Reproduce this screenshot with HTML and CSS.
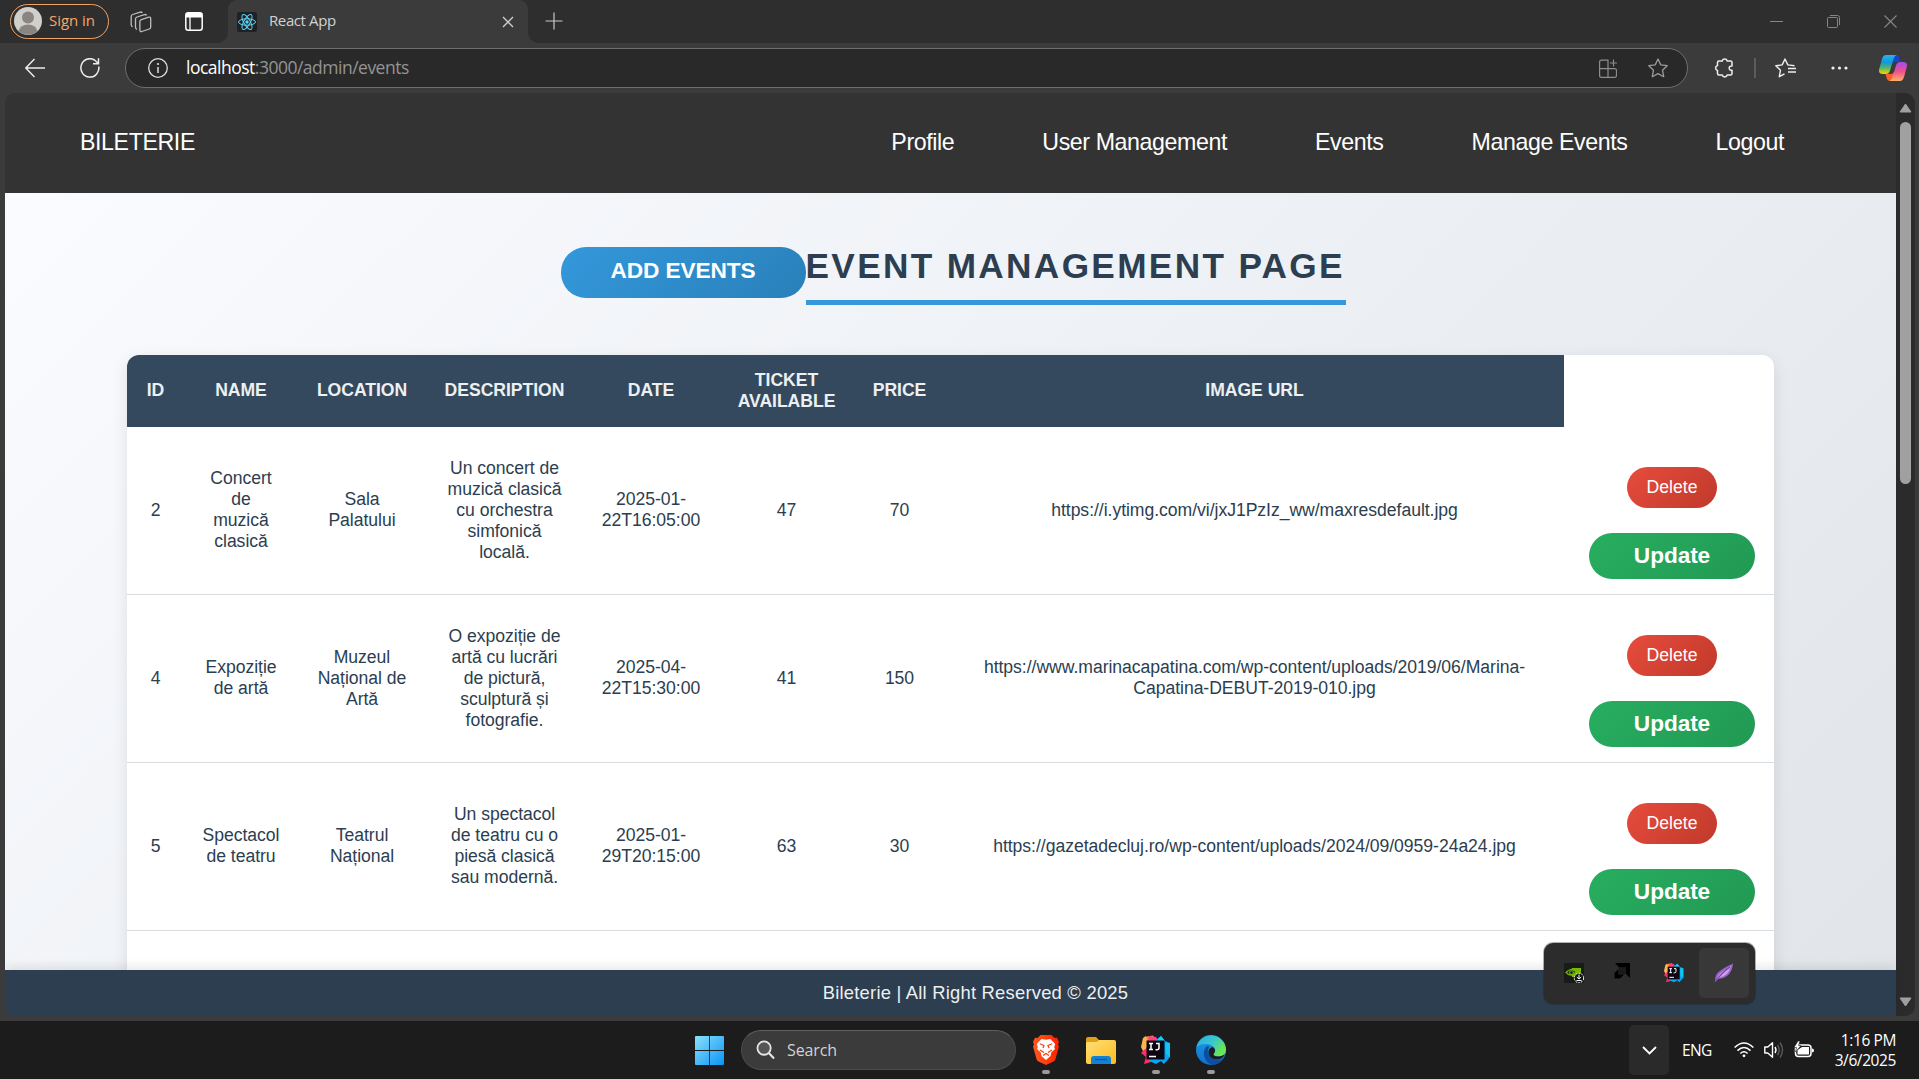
FILE: index.html
```html
<!DOCTYPE html>
<html lang="en">
<head>
<meta charset="utf-8">
<title>React App</title>
<link rel="stylesheet" href="styles.css">
</head>
<body>
<svg width="0" height="0" class="defs">
  <defs>
    <linearGradient id="gWin" x1="0" y1="0" x2="1" y2="1"><stop offset="0" stop-color="#8be0fc"/><stop offset="1" stop-color="#0a94f5"/></linearGradient>
    <linearGradient id="gFold" x1="0" y1="0" x2="1" y2="1"><stop offset="0" stop-color="#ffe07a"/><stop offset="1" stop-color="#fdbb1c"/></linearGradient>
    <linearGradient id="gBrave" x1="0" y1="0" x2="1" y2="0"><stop offset="0" stop-color="#ff5a1f"/><stop offset="1" stop-color="#ff2200"/></linearGradient>
    <linearGradient id="gEdgeTop" x1="0" y1="0" x2="1" y2=".6"><stop offset="0" stop-color="#2fa8e0"/><stop offset=".5" stop-color="#36c6d0"/><stop offset="1" stop-color="#6ee84f"/></linearGradient>
    <linearGradient id="gEdgeMid" x1="0" y1="0" x2="0" y2="1"><stop offset="0" stop-color="#1b9de2"/><stop offset="1" stop-color="#0f6fd0"/></linearGradient>
    <linearGradient id="gCopA" x1="0" y1="0" x2="0" y2="1"><stop offset="0" stop-color="#20b4f6"/><stop offset=".4" stop-color="#1597d8"/><stop offset=".7" stop-color="#5cb85c"/><stop offset="1" stop-color="#ffd400"/></linearGradient>
    <linearGradient id="gCopB" x1="0" y1="0" x2="0" y2="1"><stop offset="0" stop-color="#a34df0"/><stop offset=".5" stop-color="#f0508c"/><stop offset="1" stop-color="#ffb06a"/></linearGradient>
    <symbol id="ij" viewBox="0 0 30 30">
      <path d="M3 2l9-1.500 4 5-9 12z" fill="#ff8a2a"/><path d="M2 3l3-2 2 9-4 8-3-6z" fill="#fdb44b"/>
      <path d="M8 1l7 1 4 7-14 9z" fill="#ff3c8e"/><path d="M4 14l10 2-4 11-7 2 2-7-5-4z" fill="#fe2d6c"/>
      <path d="M15 5l5-4 4 5 5 2 0 14-6 7-3-3-5 3-7-3z" fill="#08a5f5"/><path d="M20 1l4 5-4 3-5-3z" fill="#12d0f5"/><path d="M24 8l5 0 0 14-4-3z" fill="#10c4f4"/>
      <rect x="5.500" y="5.500" width="18" height="19" fill="#0c0710"/>
      <path d="M8 8.500h4M10 8.500v6M8 14.500h4M15 8.500h3v4.500q0 1.700-2 1.700h-1.500M8 21.500h7" stroke="#fff" stroke-width="1.500" fill="none"/>
    </symbol>
  </defs>
</svg>

<div class="desktop">
  <header class="tabstrip">
    <div class="signin">
      <svg class="avatar" viewBox="0 0 28 28"><circle cx="14" cy="14" r="14" fill="#d1cfcb"/><circle cx="14" cy="10.500" r="6" fill="#8a8580"/><path d="M4.500 24q2-6.500 9.500-6.500t9.500 6.500a14 14 0 0 1-19 0z" fill="#8a8580"/></svg>
      <span>Sign in</span>
    </div>
    <svg class="i-spaces" viewBox="0 0 22 22" fill="none" stroke="#bdbdbd" stroke-width="1.300" stroke-linejoin="round"><path d="M11.300 8.600l7.500-2.400q1.900-.5 1.900 1.400v8.600q0 1.300-1.400 1.800l-7.500 2.500q-1.900.5-1.900-1.400v-8.700q0-1.300 1.400-1.800z"/><path d="M7 18.300q-1.500-.3-1.500-2V8q0-1.500 1.500-2l7.500-2.400q1.500-.4 2 .8M2.700 15.700q-1.500-.3-1.500-2V5.500Q1.200 4 2.700 3.500l7.500-2.400q1.500-.4 2 .8"/></svg>
    <svg class="i-vtabs" viewBox="0 0 18 19"><rect x=".8" y=".8" width="16.400" height="17.400" rx="2.500" fill="none" stroke="#fff" stroke-width="1.500"/><path d="M.8 3q0-2.200 2.200-2.200h12q2.200 0 2.200 2.200v2.500H.8z" fill="#fff"/><path d="M5 5v13" stroke="#fff" stroke-width="1.300"/></svg>
    <div class="tab">
      <svg class="favicon" viewBox="0 0 20 20"><rect width="20" height="20" rx="2" fill="#202124"/><g fill="none" stroke="#5ed3f3" stroke-width="1"><ellipse cx="10" cy="10" rx="8.500" ry="3.200"/><ellipse cx="10" cy="10" rx="8.500" ry="3.200" transform="rotate(60 10 10)"/><ellipse cx="10" cy="10" rx="8.500" ry="3.200" transform="rotate(120 10 10)"/></g><circle cx="10" cy="10" r="1.700" fill="#5ed3f3"/></svg>
      <span class="tab-title">React App</span>
      <svg class="i-x" viewBox="0 0 12 12"><path d="M1 1l10 10M11 1L1 11" stroke="#d0d0d0" stroke-width="1.300"/></svg>
    </div>
    <svg class="i-plus" viewBox="0 0 18 18"><path d="M9 .5v17M.5 9h17" stroke="#c8c8c8" stroke-width="1.200"/></svg>
    <div class="winbtns">
      <svg width="13" height="13"><path d="M0 6.500h13" stroke="#858585"/></svg>
      <svg width="13" height="13" fill="none" stroke="#858585"><rect x=".5" y="2.500" width="10" height="10" rx="1"/><path d="M3 .5h7.500q2 0 2 2V10"/></svg>
      <svg width="13" height="13"><path d="M.5.5l12 12M12.500.5l-12 12" stroke="#858585" stroke-width="1.200"/></svg>
    </div>
  </header>

  <div class="toolbar">
    <svg class="i-back" viewBox="0 0 20 20" fill="none" stroke="#eee" stroke-width="1.400"><path d="M20 10H1M9.500 1L.8 10l8.700 9"/></svg>
    <svg class="i-reload" viewBox="0 0 20 20" fill="none" stroke="#eee" stroke-width="1.500"><path d="M18.800 8.500A9 9.200 0 1 1 14.500 2l3.700 3.200M18.500.3v5.500h-5.500"/></svg>
    <div class="address">
      <svg class="i-info" viewBox="0 0 20 20"><circle cx="10" cy="10" r="9.300" fill="none" stroke="#ddd" stroke-width="1.300"/><path d="M10 9v6" stroke="#ddd" stroke-width="1.500"/><circle cx="10" cy="6" r="1.100" fill="#ddd"/></svg>
      <span class="url"><b>localhost</b>:3000/admin/events</span>
      <svg class="i-apps" viewBox="0 0 18 19" fill="none" stroke="#8d8d8d" stroke-width="1.200"><path d="M9 18.300H2.500q-1.900 0-1.900-1.900V3q0-1.900 1.900-1.900H9zM.6 9.700h15q1.900 0 1.900 1.900v4.800q0 1.900-1.900 1.900H9M14.500.5v7M11 4h7"/></svg>
      <svg class="i-star" viewBox="0 0 20 20" fill="none" stroke="#9a9a9a" stroke-width="1.300" stroke-linejoin="round"><path d="M10 1l2.800 5.900 6.400.8-4.700 4.500 1.200 6.500-5.700-3.100-5.700 3.100 1.200-6.500L.8 7.700l6.400-.8z"/></svg>
    </div>
    <svg class="i-puzzle" viewBox="0 0 20 20" fill="none" stroke="#eee" stroke-width="1.500" stroke-linejoin="round"><path d="M5 3h3.200a2.600 2.600 0 0 1 5 0h3.300q1.500 0 1.500 1.500V8a2.200 2.200 0 1 0 0 4.200v3.300q0 1.500-1.500 1.500h-3.300a2.600 2.600 0 0 1-5 0H5q-1.500 0-1.500-1.500v-3a2.600 2.600 0 0 1 0-5v-3Q3.500 3 5 3z"/></svg>
    <i class="sep"></i>
    <svg class="i-favs" viewBox="0 0 21 20" fill="none" stroke="#eee" stroke-width="1.400" stroke-linejoin="round"><path d="M19.500 7.700l-6.700-.8L10 1 7.200 6.900.8 7.700l4.700 4.500-1.200 6.500 5.200-2.900M13 10.500h8M13 14h8"/></svg>
    <svg class="i-dots" viewBox="0 0 17 4" fill="#f0f0f0"><circle cx="2" cy="2" r="1.600"/><circle cx="8.500" cy="2" r="1.600"/><circle cx="15" cy="2" r="1.600"/></svg>
    <svg class="i-copilot" viewBox="0 0 28 26"><path d="M14 0h3q2.500 0 3.200 2.500L21.500 7h-5q-3 0-4 3z" fill="#1745c9"/><path d="M14 26h-3q-2.500 0-3.200-2.500L6.500 19h5q3 0 4-3z" fill="#f4622c"/><path d="M7 0h11q-2.500.5-3.500 4l-3.500 11.500Q10 19 6.500 19H4q-5 0-3.800-5L3 4Q4.200 0 7 0z" fill="url(#gCopA)"/><path d="M21 26H10q2.500-.5 3.500-4L17 10.500Q18 7 21.500 7H24q5 0 3.800 5L25 22q-1.200 4-4 4z" fill="url(#gCopB)"/></svg>
  </div>

  <div class="viewport">
    <div class="page">
      <nav class="navbar">
        <span class="brand">BILETERIE</span>
        <div class="links"><span>Profile</span><span>User Management</span><span>Events</span><span>Manage Events</span><span>Logout</span></div>
      </nav>
      <main class="main">
        <div class="title-row">
          <button class="add">ADD EVENTS</button>
          <h1>EVENT MANAGEMENT PAGE</h1>
        </div>
        <table class="events">
          <colgroup><col class="c1"><col class="c2"><col class="c3"><col class="c4"><col class="c5"><col class="c6"><col class="c7"><col class="c8"><col class="c9"></colgroup>
          <thead><tr><th>ID</th><th>NAME</th><th>LOCATION</th><th>DESCRIPTION</th><th>DATE</th><th>TICKET<br>AVAILABLE</th><th>PRICE</th><th>IMAGE URL</th></tr></thead>
          <tbody>
            <tr><td>2</td><td>Concert<br>de<br>muzică<br>clasică</td><td>Sala<br>Palatului</td><td>Un concert de<br>muzică clasică<br>cu orchestra<br>simfonică<br>locală.</td><td>2025-01-<br>22T16:05:00</td><td>47</td><td>70</td><td>https://i.ytimg.com/vi/jxJ1PzIz_ww/maxresdefault.jpg</td><td class="act"><button class="del">Delete</button><button class="upd">Update</button></td></tr>
            <tr><td>4</td><td>Expoziție<br>de artă</td><td>Muzeul<br>Național de<br>Artă</td><td>O expoziție de<br>artă cu lucrări<br>de pictură,<br>sculptură și<br>fotografie.</td><td>2025-04-<br>22T15:30:00</td><td>41</td><td>150</td><td>https://www.marinacapatina.com/wp-content/uploads/2019/06/Marina-<br>Capatina-DEBUT-2019-010.jpg</td><td class="act"><button class="del">Delete</button><button class="upd">Update</button></td></tr>
            <tr><td>5</td><td>Spectacol<br>de teatru</td><td>Teatrul<br>Național</td><td>Un spectacol<br>de teatru cu o<br>piesă clasică<br>sau modernă.</td><td>2025-01-<br>29T20:15:00</td><td>63</td><td>30</td><td>https://gazetadecluj.ro/wp-content/uploads/2024/09/0959-24a24.jpg</td><td class="act"><button class="del">Delete</button><button class="upd">Update</button></td></tr>
            <tr><td></td><td></td><td></td><td></td><td></td><td></td><td></td><td></td><td></td></tr>
          </tbody>
        </table>
      </main>
      <footer class="footer">Bileterie | All Right Reserved © 2025</footer>
    </div>
    <div class="scrollbar">
      <svg width="13" height="10" viewBox="0 0 13 10"><path d="M6.500 1L12 9H1z" fill="#a0a0a0" stroke="#a0a0a0" stroke-linejoin="round"/></svg>
      <div class="thumb"></div>
      <svg width="13" height="10" viewBox="0 0 13 10"><path d="M6.500 9L12 1H1z" fill="#a0a0a0" stroke="#a0a0a0" stroke-linejoin="round"/></svg>
    </div>
  </div>

  <div class="taskbar">
    <svg class="t-win" viewBox="0 0 29 29" fill="url(#gWin)"><path d="M0 1q0-1 1-1h13.200v14H0zM15 0h13q1 0 1 1v13H15zM0 15h14.200v14H1q-1 0-1-1zM15 15h14v13q0 1-1 1H15z"/></svg>
    <div class="search">
      <svg viewBox="0 0 20 20" width="19" height="20"><circle cx="8.500" cy="8" r="7" fill="#555" stroke="#e6e6e6" stroke-width="1.900"/><path d="M13.500 13.200L19 19" stroke="#e6e6e6" stroke-width="2.200"/></svg>
      <span>Search</span>
    </div>
    <div class="app brave"><svg viewBox="0 0 26 30"><path d="M7.500 0h11l3 3 2.500-.3L26 7l-1 2.500 1 2-3.500 12.500q-.5 1.500-2 2.500L13 30l-7.500-3.500q-1.500-1-2-2.500L0 11.500l1-2L0 7l2-4.300 2.500.3z" fill="url(#gBrave)"/><path d="M13 4.800l4.500-.8 4.700 5-1 3.300.8 1.700-3.800 3.500-.7 3.500-4.500 4-4.500-4-.7-3.500L4 14l.8-1.700-1-3.300 4.700-5z" fill="#fff"/><path d="M6.800 8.800l4.200 1.700-1 2.500M19.200 8.800l-4.200 1.700 1 2.500M7 15l4 2.500M19 15l-4 2.500M10 20.500l3-2 3 2" stroke="#ff3a0d" stroke-width="1.200" fill="none"/></svg><i></i></div>
    <div class="app folder"><svg viewBox="0 0 30 27"><path d="M0 2q0-2 2-2h8l3 3h15v8H0z" fill="#e0a00f"/><path d="M0 6.500q0-1.500 1.500-1.500H11l2-2h15q2 0 2 2v20q0 2-2 2H2q-2 0-2-2z" fill="url(#gFold)"/><path d="M5 22q0-3 3-3h14q3 0 3 3v5H5z" fill="#1581d4"/><path d="M9 22.500h12" stroke="#0b5ca8" stroke-width="1.300"/></svg></div>
    <div class="app idea"><svg><use href="#ij"/></svg><i></i></div>
    <div class="app edge"><svg viewBox="0 0 30 30"><circle cx="15" cy="15" r="15" fill="url(#gEdgeMid)"/><path d="M.5 12A15 15 0 0 1 30 14q.3 7-7 7.500-6 0-5.500-2.500 2-2 1.500-4.500Q17.500 9.500 11 9 4 8.800.5 12z" fill="url(#gEdgeTop)"/><path d="M11 11q-4 3.500-3 9.500 1.500 7 8 9.400 7.500.3 12-7-4.500 3-10 1.100-6.500-2.700-6-9 .3-2 1.500-3.500z" fill="#0c4fa0"/><path d="M19 14.500q.5 2.500-1.500 4.500 0 2.700 5 2.500 3.500 0 6-2.300-1 4-5.500 5-9 1-10.500-6-.5-5 4-6.300 1.700.6 2.500 2.600z" fill="#1c1c1c"/></svg><i></i></div>
    <div class="chev"><svg width="15" height="9"><path d="M1 1l6.500 6.500L14 1" fill="none" stroke="#fff" stroke-width="1.800"/></svg></div>
    <span class="lang">ENG</span>
    <svg class="t-wifi" viewBox="0 0 20 16" fill="none" stroke="#fff" stroke-width="1.500"><path d="M.6 5.500q9.400-9 18.800 0M3.500 8.600q6.500-6.200 13 0M6.400 11.500q3.600-3.400 7.200 0"/><circle cx="10" cy="13.800" r="1.400" fill="#fff" stroke="none"/></svg>
    <svg class="t-vol" viewBox="0 0 20 18" fill="none" stroke="#fff" stroke-width="1.400"><path d="M.8 6h3L8.500 1.800v14.400L3.800 12h-3z" stroke-linejoin="round"/><path d="M11 6q2 3 0 6"/><path d="M13.500 3.800q3.500 5.200 0 10.400M16 1.500q5 7.500 0 15" stroke="#5a5a5a"/></svg>
    <svg class="t-bat" viewBox="0 0 20 17"><rect x="1.500" y="4" width="15.500" height="11.500" rx="3" fill="none" stroke="#fff" stroke-width="1.500"/><path d="M3.500 13.500V9L8 6h7v7.500z" fill="#fff"/><path d="M18 7.500q2 0 2 2t-2 2z" fill="#fff"/><path d="M4 0L0 6.500h2.500L1.500 11 7 4.500H4.500L6 0z" fill="#fff" stroke="#1c1c1c" stroke-width=".6"/></svg>
    <div class="clock">1:16 PM<br>3/6/2025</div>
  </div>

  <div class="tray">
    <div><svg width="20" height="20"><rect width="20" height="20" fill="#191b19"/><path d="M8 5h9v9H8z" fill="#76b900"/><path d="M2 9.500Q6.500 4 12 8.500 8 15.500 2 9.500z" fill="#1c2416" stroke="#76b900" stroke-width="1.200"/><circle cx="7.500" cy="9.700" r="1.900" fill="none" stroke="#76b900" stroke-width="1.100"/><circle cx="15" cy="15" r="4.700" fill="#111" stroke="#fff" stroke-dasharray="2 1"/><path d="M15 11.500v4.500M12.800 14l2.200 2 2.200-2M12.500 17.500h5" stroke="#fff" fill="none"/></svg></div>
    <div><svg class="amd" width="16" height="16"><path d="M1 0h15v15l-4-4V4.500H5z" fill="#000"/><path d="M4.500 6v5.500H10l-4 4H.5V10z" fill="#000"/><path d="M5 4.500h7V11h-2l-5.500.5z" fill="#1a1a1a"/></svg></div>
    <div><svg width="20" height="20"><use href="#ij"/></svg></div>
    <div class="hot"><svg width="20" height="20"><path d="M1 19q-.5-8 5.500-11.500Q11 4 19 .5q-.5 8-6 12.500-4 3-8.500 3z" fill="#9a63c8"/><path d="M2.500 17.500Q4 11 9 8.500q5-2.500 8-6-1 6-5.500 9.500-4 2.500-7 3z" fill="#c9a4e6"/><path d="M1 19Q7 10.500 16 4" stroke="#8040b4" stroke-width="1.200" fill="none"/></svg></div>
  </div>
</div>
</body>
</html>
```
FILE: styles.css
```css
* { box-sizing: border-box; }
body { margin: 0; overflow: hidden; font-family: "Liberation Sans", Arial, sans-serif; }
svg { display: block; flex: none; }
.defs { position: absolute; }
button { border: 0; padding: 0; color: #fff; font-family: inherit; }

.desktop { width: 1919px; height: 1079px; display: flex; flex-direction: column; position: relative; background: #3b3b3b; overflow: hidden; }

/* Browser chrome */
.tabstrip, .toolbar, .taskbar { font-family: "Open Sans", "Noto Sans", sans-serif; display: flex; flex: none; align-items: center; }
.tabstrip { height: 43px; background: #2e2e2e; padding-left: 10px; }
.signin { width: 99px; height: 35px; margin-top: -1px; border: 1.5px solid #f0a468; border-radius: 18px; display: flex; align-items: center; padding-left: 3px; gap: 7px; color: #f4a76b; font-size: 15px; letter-spacing: -.05px; white-space: nowrap; }
.signin span { margin-top: -2px; }
.avatar { width: 28px; height: 28px; }
.i-spaces { width: 22px; height: 22px; margin-left: 21px; }
.i-vtabs { width: 18px; height: 19px; margin-left: 33px; margin-top: -1px; }
.tab { position: relative; width: 300px; height: 43px; margin-left: 25px; background: #3b3b3b; border-radius: 9px 9px 0 0; display: flex; align-items: center; padding: 0 14px 0 9px; }
.tab::before, .tab::after { content: ""; position: absolute; bottom: 0; width: 10px; height: 10px; }
.tab::before { left: -10px; background: radial-gradient(circle at 0 0, #2e2e2e 9.500px, #3b3b3b 10px); }
.tab::after { right: -10px; background: radial-gradient(circle at 100% 0, #2e2e2e 9.500px, #3b3b3b 10px); }
.favicon { width: 20px; height: 20px; margin-top: 1px; }
.tab-title { margin-left: 12px; flex: 1; color: #d2d2d2; font-size: 15px; letter-spacing: -.4px; margin-top: -3px; }
.i-x { width: 12px; height: 12px; }
.i-plus { width: 18px; height: 18px; margin-left: 17px; margin-top: -1px; }
.winbtns { margin-left: auto; padding-right: 22px; display: flex; gap: 44px; }
.toolbar { height: 50px; background: #3b3b3b; padding-left: 25px; }
.i-back { width: 20px; height: 20px; }
.i-reload { width: 20px; height: 20px; margin-left: 35px; }
.address { width: 1563px; height: 40px; margin-left: 25px; border: 1px solid #6e6e6e; border-radius: 20px; background: #292929; display: flex; align-items: center; padding: 0 19px 0 22px; }
.i-info { width: 20px; height: 20px; }
.url { margin: -3px 0 0 18px; flex: 1; color: #949494; font-size: 17.500px; letter-spacing: -.5px; }
.url b { font-weight: 400; color: #fff; }
.i-apps { width: 18px; height: 19px; }
.i-star { width: 20px; height: 20px; margin-left: 31px; }
.i-puzzle { width: 20px; height: 20px; margin-left: 26px; }
.sep { width: 2px; height: 20px; background: #5c5c5c; margin-left: 20px; }
.i-favs { width: 21px; height: 20px; margin-left: 19px; }
.i-dots { width: 17px; height: 4px; margin-left: 35px; }
.i-copilot { width: 28px; height: 26px; margin-left: 31px; }

/* Web page */
.viewport { flex: none; margin: 0 4px 5px 5px; height: 923px; display: flex; border-radius: 10px; overflow: hidden; }
.page { width: 1891px; display: flex; flex-direction: column; }
.navbar { flex: none; height: 100px; background: #333; color: #fff; font-size: 23.200px; letter-spacing: -.4px; display: flex; justify-content: space-between; align-items: center; padding: 0 112px 2px 75px; }
.links { display: flex; gap: 88px; }
.main { flex: 1; min-height: 0; overflow: hidden; padding: 54px 122px 0; display: flex; flex-direction: column; background: linear-gradient(135deg, #fafbff 0%, #eff2f6 42%, #e1e5ea 100%); }
.title-row { flex: none; display: flex; justify-content: center; align-items: flex-start; height: 108px; padding-left: 5px; }
.add { width: 245px; height: 51px; border-radius: 25px; background: linear-gradient(135deg, #3498db, #2980b9); font-size: 22.700px; letter-spacing: -.1px; font-weight: 700; padding-bottom: 4px; }
h1 { margin: 0; width: 540px; height: 58px; line-height: 38px; font-size: 35.200px; letter-spacing: 2.350px; color: #2c3e50; border-bottom: 5px solid #3498db; white-space: nowrap; }
.events { flex: none; width: 1647px; table-layout: fixed; border-collapse: separate; border-spacing: 0; background: #fff; border-radius: 12px; box-shadow: 0 5px 16px rgba(0, 0, 0, .1); color: #2c3e50; font-size: 17.600px; letter-spacing: -.04px; line-height: 21px; text-align: center; white-space: nowrap; }
.c1 { width: 57px; } .c2 { width: 114px; } .c3 { width: 128px; } .c4 { width: 157px; } .c5 { width: 136px; } .c6 { width: 135px; } .c7 { width: 91px; } .c8 { width: 619px; } .c9 { width: 210px; }
.events th { height: 72px; padding: 0 0 1px; background: #34495e; color: #ecf0f1; }
.events th:first-child { border-top-left-radius: 12px; }
.events td { height: 168px; padding: 0 0 1px; border-bottom: 1px solid #d9dcde; }
.events .act { vertical-align: top; padding-top: 40px; }
.del, .upd { display: block; margin: 0 auto; transform: translateX(3px); }
.del { width: 90px; height: 41px; border-radius: 20.500px; background: linear-gradient(135deg, #e74c3c, #c0392b); font-size: 17.600px; padding-bottom: 1px; }
.upd { width: 166px; height: 46px; margin-top: 25px; border-radius: 23px; background: linear-gradient(135deg, #27ae60, #229954); font-size: 22.700px; letter-spacing: -.1px; font-weight: 700; padding-bottom: 1px; }
.footer { flex: none; height: 46px; background: #2c3e50; color: #ecf0f1; font-size: 18.400px; letter-spacing: .22px; line-height: 46px; text-align: center; padding-left: 50px; box-shadow: 0 -3px 10px rgba(0, 0, 0, .1); position: relative; }
.scrollbar { width: 19px; background: #2b2b2b; display: flex; flex-direction: column; align-items: center; padding: 10px 0 9px; }
.thumb { width: 11px; height: 362px; margin-top: 9px; margin-bottom: auto; border-radius: 6px; background: #a0a0a0; }

/* Taskbar */
.taskbar { height: 58px; background: #1c1c1c; color: #fff; padding-left: 695px; align-items: flex-start; }
.t-win { width: 29px; height: 29px; margin-top: 15px; }
.search { width: 275px; height: 40px; margin: 9px 0 0 17px; border: 1px solid #4b4b4b; border-top-color: #606060; border-radius: 20px; background: #3b3b3b; display: flex; align-items: center; padding-left: 14px; gap: 12px; font-size: 16px; letter-spacing: -.1px; color: #d2d2d2; }
.app { display: flex; flex-direction: column; align-items: center; justify-content: space-between; width: 30px; height: 39px; margin: 14px 0 0 25px; }
.app svg { width: 30px; height: 30px; }
.app i { width: 8px; height: 4px; border-radius: 2px; background: #9a9a9a; }
.brave { margin-left: 15px; }
.brave svg { width: 26px; }
.folder svg { height: 27px; margin-top: 2px; }
.chev { width: 40px; height: 50px; margin: 4px 0 0 403px; border-radius: 5px; background: #2a2a2a; display: flex; align-items: center; justify-content: center; }
.lang { font-size: 15.500px; letter-spacing: -.6px; width: 38px; line-height: 58px; margin-left: 13px; }
.t-wifi { width: 20px; height: 16px; margin: 21px 0 0 14px; }
.t-vol { width: 20px; height: 18px; margin: 20px 0 0 10px; }
.t-bat { width: 20px; height: 17px; margin: 20px 0 0 10px; }
.clock { flex: 1; text-align: right; padding: 9px 23px 0 0; font-size: 15.500px; letter-spacing: -.4px; line-height: 20px; white-space: nowrap; }

/* Overflow tray that floats over the page */
.tray { position: absolute; left: 1544px; top: 943px; width: 211px; height: 61px; border-radius: 9px; background: #2c2c2c; box-shadow: 0 0 0 1px rgba(30, 30, 30, .35); display: flex; align-items: center; padding: 0 6px 1px 5px; }
.tray div { width: 50px; height: 50px; display: flex; align-items: center; justify-content: center; }
.tray .amd { margin: 0 4px 4px 0; }
.tray .hot { border-radius: 5px; background: #383838; }
```
